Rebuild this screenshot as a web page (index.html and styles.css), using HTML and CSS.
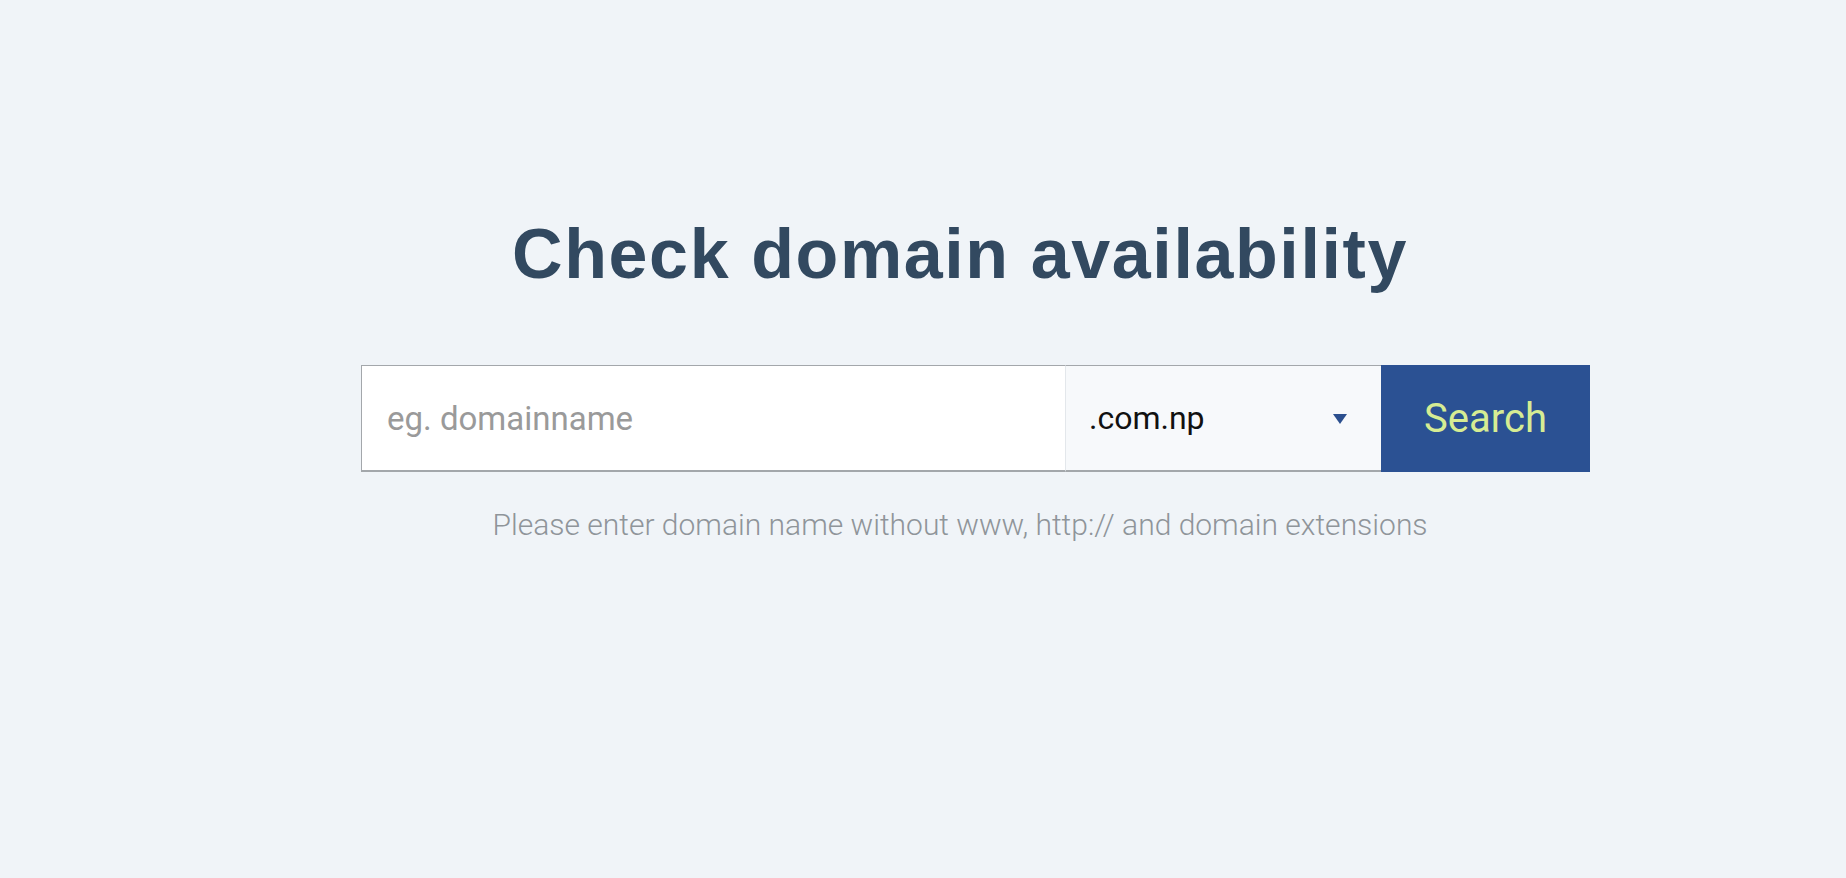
FILE: index.html
```html
<!DOCTYPE html>
<html lang="en">
<head>
<meta charset="utf-8">
<title>Check domain availability</title>
<link rel="stylesheet" href="styles.css">
</head>
<body>
<main class="page">
  <section class="domain-check">
    <h1 class="title">Check domain availability</h1>
    <form class="search-form">
      <input class="domain-input" type="text" placeholder="eg. domainname">
      <div class="ext-select">
        <span class="ext-value">.com.np</span>
        <svg class="caret" width="14" height="10" viewBox="0 0 14 10"><path d="M0 0H14L7 10Z" fill="#2b4f8e"/></svg>
      </div>
      <button class="search-btn" type="button">Search</button>
    </form>
    <p class="hint">Please enter domain name without www, http:// and domain extensions</p>
  </section>
</main>
</body>
</html>
```

FILE: styles.css
```css
html, body {
  margin: 0;
  padding: 0;
  background: #f0f4f8;
  height: 100%;
}
.page {
  padding-top: 219px;
}
.domain-check {
  width: 1260px;
  margin-left: 330px;
  display: flex;
  flex-direction: column;
  align-items: center;
}
.title {
  margin: 0;
  font-family: "Liberation Sans", Arial, sans-serif;
  font-weight: 700;
  font-size: 70px;
  line-height: 70px;
  color: #324960;
  letter-spacing: 1.6px;
}
.search-form {
  margin-top: 76px;
  align-self: flex-start;
  margin-left: 31px;
  display: flex;
  width: 1229px;
  height: 107px;
}
.domain-input {
  box-sizing: border-box;
  width: 705px;
  height: 107px;
  margin: 0;
  border: 1px solid #a3a7ab;
  border-right: 1px solid #e3e7eb;
  border-bottom-width: 2px;
  background: #ffffff;
  padding: 0 0 0 25px;
  font-family: Roboto, "Liberation Sans", sans-serif;
  font-weight: 400;
  font-size: 33px;
  color: #333;
  outline: none;
}
.domain-input::placeholder {
  color: #9a9a9a;
}
.ext-select {
  box-sizing: border-box;
  width: 315px;
  height: 107px;
  border-top: 1px solid #a3a7ab;
  border-bottom: 2px solid #a3a7ab;
  background: #f7f9fb;
  display: flex;
  align-items: center;
  justify-content: space-between;
  padding: 0 34px 0 23px;
}
.ext-value {
  font-family: Roboto, "Liberation Sans", sans-serif;
  font-size: 32px;
  color: #111;
}
.caret {
  display: block;
  margin-top: 2px;
}
.search-btn {
  width: 209px;
  height: 107px;
  margin: 0;
  border: none;
  background: #2b5193;
  color: #d6ec93;
  font-family: Roboto, "Liberation Sans", sans-serif;
  font-size: 40px;
  padding: 0;
  cursor: pointer;
}
.hint {
  margin: 36px 0 0 0;
  font-family: Roboto, "Liberation Sans", sans-serif;
  font-weight: 300;
  font-size: 30px;
  line-height: 34px;
  color: #8f959a;
}
```
